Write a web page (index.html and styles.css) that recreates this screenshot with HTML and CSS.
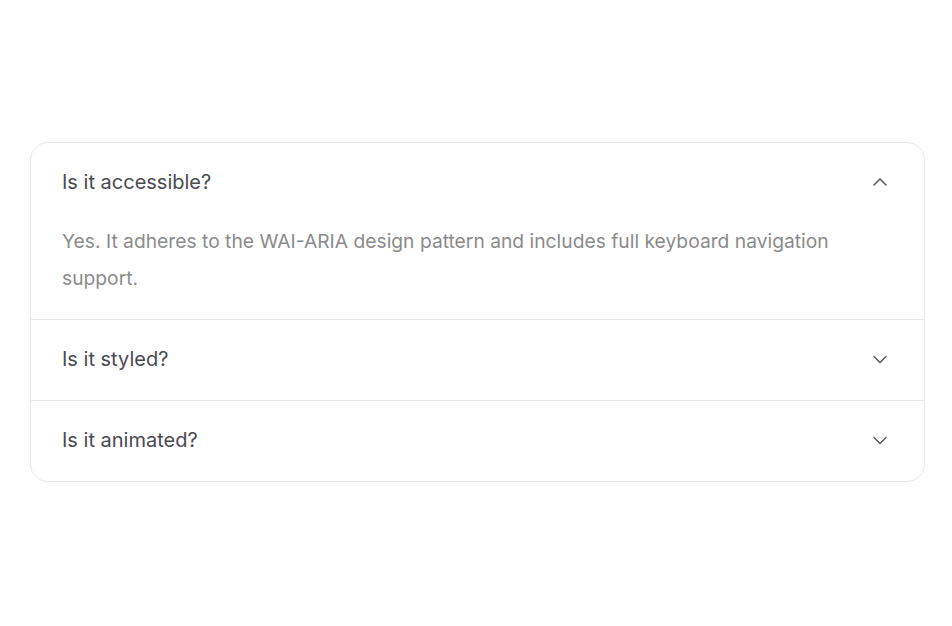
FILE: index.html
```html
<!DOCTYPE html>
<html lang="en">
<head>
<meta charset="utf-8">
<title>Accordion</title>
<link rel="stylesheet" href="styles.css">
</head>
<body>
<main class="page">
  <section class="accordion">
    <div class="item open">
      <button class="trigger">
        <span class="label">Is it accessible?</span>
        <svg class="chev" viewBox="0 0 16 16" width="16" height="16"><path d="M2 11l6-6 6 6" fill="none" stroke="currentColor" stroke-width="1.5" stroke-linecap="round" stroke-linejoin="round"/></svg>
      </button>
      <div class="content">Yes. It adheres to the WAI-ARIA design pattern and includes full keyboard navigation support.</div>
    </div>
    <div class="item">
      <button class="trigger">
        <span class="label">Is it styled?</span>
        <svg class="chev" viewBox="0 0 16 16" width="16" height="16"><path d="M2 5.5l6 6 6-6" fill="none" stroke="currentColor" stroke-width="1.5" stroke-linecap="round" stroke-linejoin="round"/></svg>
      </button>
    </div>
    <div class="item">
      <button class="trigger">
        <span class="label">Is it animated?</span>
        <svg class="chev" viewBox="0 0 16 16" width="16" height="16"><path d="M2 5.5l6 6 6-6" fill="none" stroke="currentColor" stroke-width="1.5" stroke-linecap="round" stroke-linejoin="round"/></svg>
      </button>
    </div>
  </section>
</main>
</body>
</html>
```
FILE: styles.css
```css
html, body {
  margin: 0;
  padding: 0;
  background: #ffffff;
}
body {
  font-family: Inter, "Noto Sans", sans-serif;
}
.page {
  height: 626px;
  box-sizing: border-box;
  padding: 0 27px 3px 30px;
  display: flex;
  flex-direction: column;
  justify-content: center;
}
.accordion {
  border: 1px solid #e8e8e8;
  border-radius: 18px;
  overflow: hidden;
}
.item + .item {
  border-top: 1px solid #e8e8e8;
}
.trigger {
  width: 100%;
  height: 80px;
  display: flex;
  align-items: center;
  justify-content: space-between;
  padding: 0 36px 2px 31px;
  border: 0;
  background: transparent;
  font: inherit;
  font-size: 20px;
  color: #4a4a51;
  text-align: left;
  cursor: pointer;
}
.chev {
  color: #55555c;
}
.content {
  padding: 0 60px 22px 31px;
  font-size: 19.25px;
  line-height: 37px;
  color: #8b8b8b;
}
```
